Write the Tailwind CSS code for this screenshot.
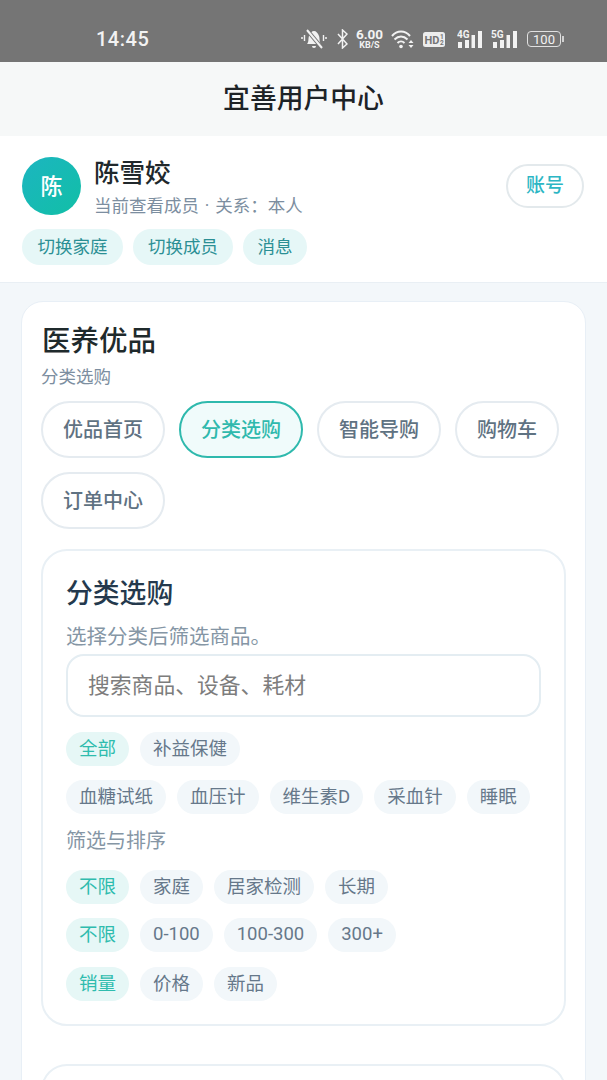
<!DOCTYPE html>
<html lang="zh-CN">
  <head>
    <meta charset="UTF-8" />
    <meta name="viewport" content="width=device-width, initial-scale=1.0" />
    <title>宜善用户中心</title>
    <script src="https://cdn.jsdelivr.net/npm/@tailwindcss/browser@4"></script>
  </head>
  <body class="h-[1080px] overflow-hidden bg-[#f3f7fa] font-[Roboto,'Noto_Sans_CJK_SC',sans-serif]">
    <!-- Status bar -->
    <div class="h-[62px] bg-[#757575] flex items-center pl-[96px] pr-[43px] pt-[16px] text-[#f2f2f2]">
      <span class="text-[20px] font-medium tracking-[0.5px]">14:45</span>
      <div class="ml-auto flex items-center">
        <svg class="w-[26px] h-[20px]" viewBox="0 0 26 20" fill="none" stroke="#f2f2f2" stroke-width="2">
          <path d="M0 9h2M24 9h2M3.500 6v6M22.500 6v6" stroke-width="1.400" />
          <path d="M6 15c2-2 1-5 2-8 1-3 3-5 5-5s4 2 5 5c1 3 0 6 2 8z" fill="#f2f2f2" stroke="none" />
          <path d="M11 17a2 2 0 0 0 4 0z" fill="#f2f2f2" stroke="none" />
          <path d="M6 1l15 18" stroke="#757575" stroke-width="4" />
          <path d="M6 1l15 18" />
        </svg>
        <svg class="ml-[10px] w-[11px] h-[20px]" viewBox="0 0 11 20" fill="none" stroke="#f2f2f2" stroke-width="1.500">
          <path d="M1 5l9 10-4.500 4V1L10 5 1 15" />
        </svg>
        <div class="ml-[8px] w-[27px] flex flex-col items-center font-bold leading-none">
          <span class="text-[13.500px] leading-[12px]">6.00</span>
          <span class="text-[9px] leading-[10px]">KB/S</span>
        </div>
        <svg class="ml-[8px] w-[23px] h-[19px]" viewBox="0 0 23 19" fill="none" stroke="#f2f2f2" stroke-width="2">
          <path d="M1 6c5-6 13-6 18 0M3.500 9.500c4-4 9-4 13 0M6.500 13c2-2 5-2 7 0" />
          <circle cx="10" cy="16.500" r="1.800" fill="#f2f2f2" stroke="none" />
          <path d="M17.500 13l2.500-3 2.500 3zM17.500 15l2.500 3 2.500-3z" fill="#f2f2f2" stroke="none" />
        </svg>
        <svg class="ml-[9px] w-[22px] h-[15px]" viewBox="0 0 22 15">
          <rect width="22" height="15" rx="2.500" fill="#ededed" />
          <text x="1.500" y="11.500" font-size="11" font-weight="700" fill="#757575">HD</text>
          <text x="17" y="6.500" font-size="6.500" font-weight="700" fill="#757575">1</text>
          <text x="17" y="13" font-size="6.500" font-weight="700" fill="#757575">2</text>
        </svg>
        <svg class="ml-[12px] w-[25px] h-[18px]" viewBox="0 0 25 18" fill="#f2f2f2">
          <text x="0" y="8" font-size="10" font-weight="700">4G</text>
          <rect x="1" y="12" width="4" height="6" /><rect x="8" y="10" width="4" height="8" />
          <rect x="14.500" y="5" width="3.500" height="13" /><rect x="21" y="1" width="4" height="17" />
        </svg>
        <svg class="ml-[9px] w-[26px] h-[18px]" viewBox="0 0 26 18" fill="#f2f2f2">
          <text x="0" y="8" font-size="10" font-weight="700">5G</text>
          <rect x="2" y="12" width="4" height="6" /><rect x="9" y="10" width="4" height="8" />
          <rect x="15.500" y="5" width="3.500" height="13" /><rect x="22" y="1" width="4" height="17" />
        </svg>
        <div class="ml-[10px] flex items-center">
          <div class="w-[34px] h-[16px] border border-[#e0e0e0] rounded-[4px] flex items-center justify-center text-[13px] leading-none">100</div>
          <i class="block w-[2px] h-[6px] bg-[#d0d0d0] ml-[1px]"></i>
        </div>
      </div>
    </div>

    <!-- Title bar -->
    <div class="h-[74px] bg-[#f6f8f8] flex items-center justify-center">
      <h1 class="text-[26.800px] font-medium text-[#1d2327]">宜善用户中心</h1>
    </div>

    <!-- User block -->
    <div class="h-[147px] bg-white border-b border-[#e9eff4] px-[22px] pt-[21px]">
      <div class="flex items-start h-[58px]">
        <div class="w-[59px] h-[58px] rounded-full bg-gradient-to-br from-[#1cb5c0] to-[#12bfa6] flex items-center justify-center text-white text-[22px] font-medium">陈</div>
        <div class="ml-[13px] flex flex-col">
          <span class="text-[25.500px] leading-[34px] -mt-[1px] font-medium text-[#20282c]">陈雪姣</span>
          <span class="text-[17.500px] leading-[24px] mt-[4px] text-[#7c8ea0]">当前查看成员<span class="mx-[1.500px]"> · </span>关系：本人</span>
        </div>
        <button class="ml-auto mr-[1px] mt-[7px] w-[78px] h-[44px] rounded-full bg-white border-2 border-[#e3e9ec] text-[#2cb6c4] text-[19px] font-medium">账号</button>
      </div>
      <div class="flex gap-[10px] mt-[14px]">
        <span class="h-[36px] px-[15.500px] pt-[1px] rounded-full bg-[#e6f7f7] text-[#2b8f94] text-[17.500px] flex items-center">切换家庭</span>
        <span class="h-[36px] px-[15px] pt-[1px] rounded-full bg-[#e6f7f7] text-[#2b8f94] text-[17.500px] flex items-center">切换成员</span>
        <span class="h-[36px] px-[14.500px] pt-[1px] rounded-full bg-[#e6f7f7] text-[#2b8f94] text-[17.500px] flex items-center">消息</span>
      </div>
    </div>

    <!-- Main card -->
    <div class="mt-[18px] mx-[21px] h-[900px] bg-white border border-[#e8eff6] rounded-[22px] px-[19px] pt-[20px]">
      <h2 class="pl-[1px] text-[28.500px] leading-[40px] font-medium text-[#1f2a2c]">医养优品</h2>
      <p class="text-[17.500px] leading-[24px] mt-[3px] text-[#7c8ea0]">分类选购</p>

      <div class="mt-[12px] flex flex-wrap gap-[14px]">
        <button class="h-[57px] px-[20px] rounded-full border-2 border-[#e5ebf0] bg-white text-[#5f7282] text-[20px] font-medium">优品首页</button>
        <button class="h-[57px] px-[20px] rounded-full border-2 border-[#2fb9ad] bg-[#f0fbfb] text-[#2fb9ad] text-[20px] font-medium">分类选购</button>
        <button class="h-[57px] px-[20px] rounded-full border-2 border-[#e5ebf0] bg-white text-[#5f7282] text-[20px] font-medium">智能导购</button>
        <button class="h-[57px] px-[20px] rounded-full border-2 border-[#e5ebf0] bg-white text-[#5f7282] text-[20px] font-medium">购物车</button>
        <button class="h-[57px] px-[20px] rounded-full border-2 border-[#e5ebf0] bg-white text-[#5f7282] text-[20px] font-medium">订单中心</button>
      </div>

      <!-- Category panel -->
      <div class="mt-[20px] w-[525px] h-[477px] border-2 border-[#e9f0f5] rounded-[26px] px-[23px] pt-[22px]">
        <h3 class="text-[26.800px] leading-[42px] font-medium text-[#24394d]">分类选购</h3>
        <p class="text-[20.500px] leading-[28px] mt-[8px] text-[#8596a5]">选择分类后筛选商品。</p>
        <div class="mt-[3px] h-[63px] pt-[2px] border-2 border-[#e4edf2] rounded-[18px] flex items-center pl-[20px] text-[21.800px] text-[#7d7d7d]">搜索商品、设备、耗材</div>

        <div class="mt-[15px] flex gap-[11px]">
          <span class="h-[34px] px-[13px] pt-[2px] rounded-full bg-[#e6f7f6] text-[#2fbcae] text-[18.500px] flex items-center">全部</span>
          <span class="h-[34px] px-[13px] pt-[2px] rounded-full bg-[#f2f7fa] text-[#66788a] text-[18.500px] flex items-center">补益保健</span>
        </div>
        <div class="mt-[14px] flex gap-[11px]">
          <span class="h-[34px] px-[13px] pt-[2px] rounded-full bg-[#f2f7fa] text-[#66788a] text-[18.500px] flex items-center">血糖试纸</span>
          <span class="h-[34px] px-[13px] pt-[2px] rounded-full bg-[#f2f7fa] text-[#66788a] text-[18.500px] flex items-center">血压计</span>
          <span class="h-[34px] px-[13px] pt-[2px] rounded-full bg-[#f2f7fa] text-[#66788a] text-[18.500px] flex items-center">维生素D</span>
          <span class="h-[34px] px-[13px] pt-[2px] rounded-full bg-[#f2f7fa] text-[#66788a] text-[18.500px] flex items-center">采血针</span>
          <span class="h-[34px] px-[13px] pt-[2px] rounded-full bg-[#f2f7fa] text-[#66788a] text-[18.500px] flex items-center">睡眠</span>
        </div>
        <p class="mt-[14px] text-[20px] leading-[26px] text-[#8596a5]">筛选与排序</p>
        <div class="mt-[16px] flex gap-[11px]">
          <span class="h-[34px] px-[13px] pt-[2px] rounded-full bg-[#e6f7f6] text-[#2fbcae] text-[18.500px] flex items-center">不限</span>
          <span class="h-[34px] px-[13px] pt-[2px] rounded-full bg-[#f2f7fa] text-[#66788a] text-[18.500px] flex items-center">家庭</span>
          <span class="h-[34px] px-[13px] pt-[2px] rounded-full bg-[#f2f7fa] text-[#66788a] text-[18.500px] flex items-center">居家检测</span>
          <span class="h-[34px] px-[13px] pt-[2px] rounded-full bg-[#f2f7fa] text-[#66788a] text-[18.500px] flex items-center">长期</span>
        </div>
        <div class="mt-[14px] flex gap-[11px]">
          <span class="h-[34px] px-[13px] pt-[2px] rounded-full bg-[#e6f7f6] text-[#2fbcae] text-[18.500px] flex items-center">不限</span>
          <span class="h-[34px] px-[13px] rounded-full bg-[#f2f7fa] text-[#66788a] text-[18.500px] flex items-center">0-100</span>
          <span class="h-[34px] px-[13px] rounded-full bg-[#f2f7fa] text-[#66788a] text-[18.500px] flex items-center">100-300</span>
          <span class="h-[34px] px-[13px] rounded-full bg-[#f2f7fa] text-[#66788a] text-[18.500px] flex items-center">300+</span>
        </div>
        <div class="mt-[15px] flex gap-[11px]">
          <span class="h-[34px] px-[13px] pt-[2px] rounded-full bg-[#e6f7f6] text-[#2fbcae] text-[18.500px] flex items-center">销量</span>
          <span class="h-[34px] px-[13px] pt-[2px] rounded-full bg-[#f2f7fa] text-[#66788a] text-[18.500px] flex items-center">价格</span>
          <span class="h-[34px] px-[13px] pt-[2px] rounded-full bg-[#f2f7fa] text-[#66788a] text-[18.500px] flex items-center">新品</span>
        </div>
      </div>

      <!-- Next panel, cut off by the fold -->
      <div class="mt-[38px] w-[525px] h-[200px] border-2 border-[#e9f0f5] rounded-[26px]"></div>
    </div>
  </body>
</html>
